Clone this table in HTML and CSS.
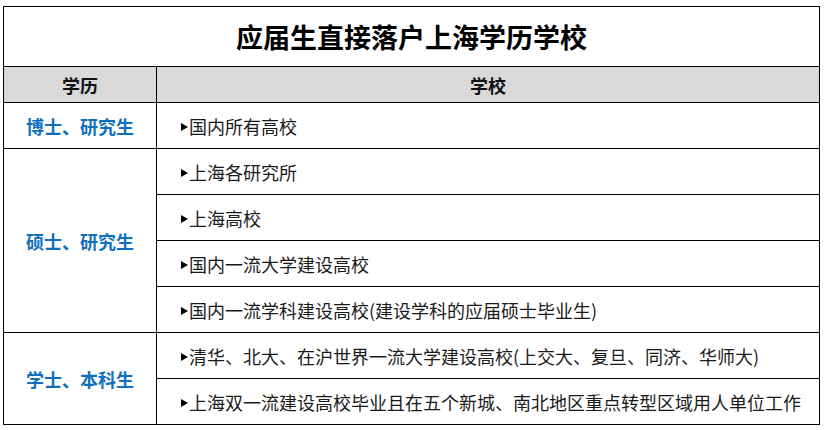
FILE: index.html
```html
<!DOCTYPE html>
<html lang="zh-CN">
<head>
<meta charset="utf-8">
<title>应届生直接落户上海学历学校</title>
<link rel="stylesheet" href="styles.css">
</head>
<body>
<div class="page">
<table class="tbl">
  <colgroup><col class="c1"><col class="c2"></colgroup>
  <tr class="title-row"><td colspan="2" class="title">应届生直接落户上海学历学校</td></tr>
  <tr class="head-row"><th>学历</th><th>学校</th></tr>
  <tr class="row"><td class="deg">博士、研究生</td><td class="sch"><span class="bul"></span>国内所有高校</td></tr>
  <tr class="row"><td class="deg" rowspan="4">硕士、研究生</td><td class="sch"><span class="bul"></span>上海各研究所</td></tr>
  <tr class="row"><td class="sch"><span class="bul"></span>上海高校</td></tr>
  <tr class="row"><td class="sch"><span class="bul"></span>国内一流大学建设高校</td></tr>
  <tr class="row"><td class="sch"><span class="bul"></span>国内一流学科建设高校(建设学科的应届硕士毕业生)</td></tr>
  <tr class="row"><td class="deg" rowspan="2">学士、本科生</td><td class="sch"><span class="bul"></span>清华、北大、在沪世界一流大学建设高校(上交大、复旦、同济、华师大)</td></tr>
  <tr class="row"><td class="sch"><span class="bul"></span>上海双一流建设高校毕业且在五个新城、南北地区重点转型区域用人单位工作</td></tr>
</table>
</div>
</body>
</html>
```

FILE: styles.css
```css
html, body {
  margin: 0;
  padding: 0;
  background: #ffffff;
}
.page {
  padding: 6px 0 0 3px;
  font-family: "Noto Sans CJK SC", "Noto Sans", sans-serif;
}
.tbl {
  width: 817px;
  border-collapse: collapse;
  border: 1px solid #000;
  table-layout: fixed;
}
.c1 { width: 153px; }
.tbl td, .tbl th {
  border: 1px solid #000;
  padding: 0;
}
.title-row { height: 60px; }
.title {
  text-align: center;
  font-size: 27px;
  font-weight: 700;
  color: #000;
  line-height: 1;
}
.head-row { height: 36px; }
.head-row th {
  background: #d9d9d9;
  font-size: 18px;
  font-weight: 700;
  color: #111;
  text-align: center;
  line-height: 1;
}
.row { height: 46px; }
.deg {
  text-align: center;
  font-size: 18px;
  font-weight: 700;
  color: #0f6fbd;
  line-height: 1;
}
.sch {
  padding-left: 24px !important;
  font-size: 18px;
  color: #1a1a1a;
  line-height: 1;
  white-space: nowrap;
}
.bul {
  display: inline-block;
  width: 0;
  height: 0;
  border-left: 7px solid #000;
  border-top: 4px solid transparent;
  border-bottom: 4px solid transparent;
  margin-right: 1px;
  vertical-align: 3px;
}
```
